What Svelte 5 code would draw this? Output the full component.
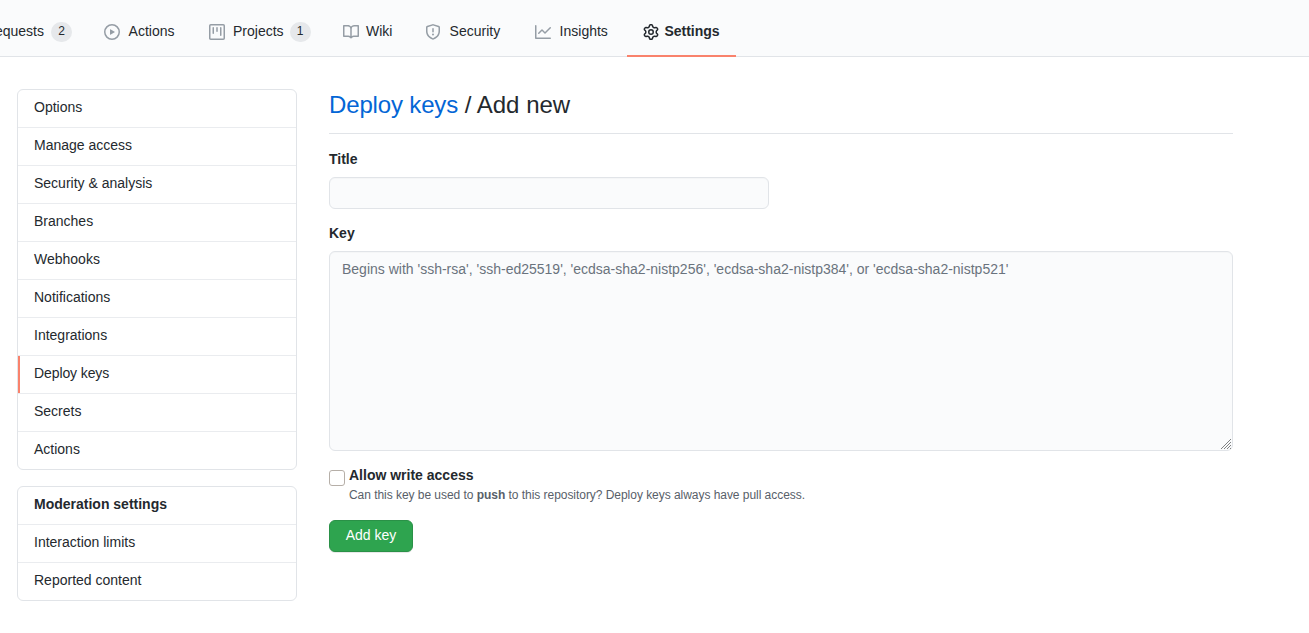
<script>
  const icons = {
    play: 'M1.5 8a6.5 6.5 0 1113 0 6.5 6.5 0 01-13 0zM8 0a8 8 0 100 16A8 8 0 008 0zM6.379 5.227A.25.25 0 006 5.442v5.117a.25.25 0 00.379.214l4.264-2.559a.25.25 0 000-.428L6.379 5.227z',
    project: 'M1.75 0A1.75 1.75 0 000 1.75v12.5C0 15.216.784 16 1.75 16h12.5A1.75 1.75 0 0016 14.25V1.75A1.75 1.75 0 0014.25 0H1.75zM1.5 1.75a.25.25 0 01.25-.25h12.5a.25.25 0 01.25.25v12.5a.25.25 0 01-.25.25H1.75a.25.25 0 01-.25-.25V1.75zM11.75 3a.75.75 0 00-.75.75v7.5a.75.75 0 001.5 0v-7.5a.75.75 0 00-.75-.75zm-8.25.75a.75.75 0 011.5 0v5.5a.75.75 0 01-1.5 0v-5.5zM8 3a.75.75 0 00-.75.75v3.5a.75.75 0 001.5 0v-3.5A.75.75 0 008 3z',
    book: 'M0 1.75A.75.75 0 01.75 1h4.253c1.227 0 2.317.59 3 1.501A3.744 3.744 0 0111.006 1h4.245a.75.75 0 01.75.75v10.5a.75.75 0 01-.75.75h-4.507a2.25 2.25 0 00-1.591.659l-.622.621a.75.75 0 01-1.06 0l-.622-.621A2.25 2.25 0 005.258 13H.75a.75.75 0 01-.75-.75V1.75zm8.755 3a2.25 2.25 0 012.25-2.25H14.5v9h-3.757c-.71 0-1.4.201-1.992.572l.004-7.322zm-1.504 7.324l.004-5.073-.002-2.253A2.25 2.25 0 005.003 2.5H1.5v9h3.757a3.75 3.75 0 011.994.574z',
    shield: 'M7.467.133a1.75 1.75 0 011.066 0l5.25 1.68A1.75 1.75 0 0115 3.48V7c0 1.566-.32 3.182-1.303 4.682-.983 1.498-2.585 2.813-5.032 3.855a1.7 1.7 0 01-1.33 0c-2.447-1.042-4.049-2.357-5.032-3.855C1.32 10.182 1 8.566 1 7V3.48a1.75 1.75 0 011.217-1.667l5.25-1.68zm.61 1.429a.25.25 0 00-.153 0l-5.25 1.68a.25.25 0 00-.174.238V7c0 1.358.275 2.666 1.057 3.86.784 1.194 2.121 2.34 4.366 3.297a.2.2 0 00.154 0c2.245-.956 3.582-2.104 4.366-3.298C13.225 9.666 13.5 8.36 13.5 7V3.48a.25.25 0 00-.174-.237l-5.25-1.68zM9 10.5a1 1 0 11-2 0 1 1 0 012 0zm-.25-5.75a.75.75 0 10-1.5 0v3a.75.75 0 001.5 0v-3z',
    graph: 'M1.5 1.75a.75.75 0 00-1.5 0v12.5c0 .414.336.75.75.75h14.5a.75.75 0 000-1.5H1.5V1.75zm14.28 2.53a.75.75 0 00-1.06-1.06L10 7.94 7.53 5.47a.75.75 0 00-1.06 0L3.22 8.72a.75.75 0 001.06 1.06L7 7.06l2.47 2.47a.75.75 0 001.06 0l5.25-5.25z',
    gear: 'M7.429 1.525a6.593 6.593 0 011.142 0c.036.003.108.036.137.146l.289 1.105c.147.56.55.967.997 1.189.174.086.341.183.501.29.417.278.97.423 1.53.27l1.102-.303c.11-.03.175.016.195.046.219.31.41.641.573.989.014.031.022.11-.059.19l-.815.806c-.411.406-.562.957-.53 1.456a4.588 4.588 0 010 .582c-.032.499.119 1.05.53 1.456l.815.806c.08.08.073.159.059.19a6.494 6.494 0 01-.573.99c-.02.029-.086.074-.195.045l-1.103-.303c-.559-.153-1.112-.008-1.529.27-.16.107-.327.204-.5.29-.449.222-.851.628-.998 1.189l-.289 1.105c-.029.11-.101.143-.137.146a6.613 6.613 0 01-1.142 0c-.036-.003-.108-.037-.137-.146l-.289-1.105c-.147-.56-.55-.967-.997-1.189a4.502 4.502 0 01-.501-.29c-.417-.278-.97-.423-1.53-.27l-1.102.303c-.11.03-.175-.016-.195-.046a6.492 6.492 0 01-.573-.989c-.014-.031-.022-.11.059-.19l.815-.806c.411-.406.562-.957.53-1.456a4.587 4.587 0 010-.582c.032-.499-.119-1.05-.53-1.456l-.815-.806c-.08-.08-.073-.159-.059-.19a6.44 6.44 0 01.573-.99c.02-.029.086-.075.195-.045l1.103.303c.559.153 1.112.008 1.529-.27.16-.107.327-.204.5-.29.449-.222.851-.628.998-1.189l.289-1.105c.029-.11.101-.143.137-.146zM8 0c-.236 0-.47.01-.701.03-.743.065-1.29.615-1.458 1.261l-.29 1.106c-.017.066-.078.158-.211.224a5.994 5.994 0 00-.668.386c-.123.082-.233.09-.3.071L3.27 2.776c-.644-.177-1.392.02-1.82.63a7.977 7.977 0 00-.704 1.217c-.315.675-.111 1.422.363 1.891l.815.806c.05.048.098.147.088.294a6.084 6.084 0 000 .772c.01.147-.038.246-.088.294l-.815.806c-.474.469-.678 1.216-.363 1.891.2.428.436.835.704 1.218.428.609 1.176.806 1.82.63l1.103-.303c.066-.019.176-.011.299.071.213.143.436.272.668.386.133.066.194.158.212.224l.289 1.106c.169.646.715 1.196 1.458 1.26a8.094 8.094 0 001.402 0c.743-.064 1.29-.614 1.458-1.26l.29-1.106c.017-.066.078-.158.211-.224a5.98 5.98 0 00.668-.386c.123-.082.233-.09.3-.071l1.102.302c.644.177 1.392-.02 1.82-.63.268-.382.505-.789.704-1.217.315-.675.111-1.422-.364-1.891l-.814-.806c-.05-.048-.098-.147-.088-.294a6.1 6.1 0 000-.772c-.01-.147.039-.246.088-.294l.814-.806c.475-.469.679-1.216.364-1.891a7.992 7.992 0 00-.704-1.218c-.428-.609-1.176-.806-1.82-.63l-1.103.303c-.066.019-.176.011-.299-.071a5.991 5.991 0 00-.668-.386c-.133-.066-.194-.158-.212-.224L10.16 1.29C9.99.645 9.444.095 8.701.031A8.094 8.094 0 008 0zm1.5 8a1.5 1.5 0 11-3 0 1.5 1.5 0 013 0zM11 8a3 3 0 11-6 0 3 3 0 016 0z'
  };

  const tabs = [
    { label: 'Actions', icon: 'play', width: 105 },
    { label: 'Projects', icon: 'project', count: 1, width: 134 },
    { label: 'Wiki', icon: 'book', width: 82 },
    { label: 'Security', icon: 'shield', width: 110 },
    { label: 'Insights', icon: 'graph', width: 108 },
    { label: 'Settings', icon: 'gear', width: 109, selected: true }
  ];

  const menu = ['Options', 'Manage access', 'Security & analysis', 'Branches', 'Webhooks', 'Notifications', 'Integrations', 'Deploy keys', 'Secrets', 'Actions'];
  const moderation = ['Interaction limits', 'Reported content'];
</script>

<nav class="tabs">
  <div class="tab first"><span class="label">Pull requests</span><span class="count">2</span></div>
  {#each tabs as t}
    <div class="tab {t.icon}" class:selected={t.selected} style:width="{t.width}px">
      <svg viewBox="0 0 16 16" width="16" height="16"><path fill-rule="evenodd" d={icons[t.icon]} /></svg>
      <span class="label">{t.label}</span>
      {#if t.count}<span class="count">{t.count}</span>{/if}
    </div>
  {/each}
</nav>

<div class="page">
  <aside>
    <ul class="menu">
      {#each menu as m}
        <li class:current={m === 'Deploy keys'}><span>{m}</span></li>
      {/each}
    </ul>
    <ul class="menu">
      <li class="heading"><span>Moderation settings</span></li>
      {#each moderation as m}<li><span>{m}</span></li>{/each}
    </ul>
  </aside>

  <main>
    <h2><span class="link">Deploy keys</span> / Add new</h2>
    <label for="title">Title</label>
    <input id="title" class="field" type="text" />
    <label for="key">Key</label>
    <div class="area">
      <textarea id="key" class="field" placeholder="Begins with 'ssh-rsa', 'ssh-ed25519', 'ecdsa-sha2-nistp256', 'ecdsa-sha2-nistp384', or 'ecdsa-sha2-nistp521'"></textarea>
      <svg class="grip" viewBox="0 0 12 12" width="12" height="12"><path d="M1 11L11 1M4 11l7-7M7 11l4-4M10 11l1-1" /></svg>
    </div>
    <div class="check">
      <input id="write" type="checkbox" />
      <div>
        <label for="write">Allow write access</label>
        <p>Can this key be used to <b>push</b> to this repository? Deploy keys always have pull access.</p>
      </div>
    </div>
    <button>Add key</button>
  </main>
</div>

<style>
  :global(body) {
    margin: 0;
    overflow: hidden;
    background: #fff;
    color: #24292e;
    font: 14px/21px "Liberation Sans", Arial, sans-serif;
  }
  * { box-sizing: border-box; }
  .tabs {
    display: flex;
    height: 57px;
    background: #fafbfc;
    border-bottom: 1px solid #e1e4e8;
  }
  .tab {
    display: flex;
    flex: none;
    height: 57px;
    padding: 7px 0 0 16px;
    align-items: center;
    white-space: nowrap;
    border-bottom: 2px solid transparent;
  }
  .tab.first { width: 88px; padding: 7px 16px 0 0; justify-content: flex-end; }
  .tab svg { flex: none; margin-right: 8.6px; fill: #959da5; position: relative; top: 1px; }
  .tab.project svg { margin-right: 8px; }
  .tab.book svg { margin-right: 7px; }
  .tab .count {
    flex: none;
    width: 21px;
    height: 20px;
    margin: 2px 0 0 7px;
    border-radius: 10px;
    background: rgba(209, 213, 218, 0.5);
    font-size: 12px;
    font-weight: 500;
    line-height: 19px;
    text-align: center;
  }
  .tab.project .count { margin-left: 6px; }
  .tab.selected { border-bottom: 2px solid #f9826c; font-weight: 600; }
  .tab.selected svg { fill: #24292e; margin-right: 5.4px; }
  .page { display: flex; gap: 32px; padding: 32px 76px 0 17px; }
  aside { width: 280px; flex: none; }
  .menu {
    list-style: none;
    margin: 0 0 16px;
    padding: 0;
    border: 1px solid #e1e4e8;
    border-radius: 6px;
    overflow: hidden;
  }
  .menu li { height: 38px; padding: 7px 16px; border-bottom: 1px solid #eaecef; }
  .menu li:last-child { height: 37px; border-bottom: 0; }
  .menu .current { box-shadow: inset 2px 0 #f9826c; letter-spacing: -0.1px; }
  .menu .heading { font-weight: 600; }
  main { flex: 1; }
  h2 {
    margin: 0 0 16px;
    height: 45px;
    border-bottom: 1px solid #e1e4e8;
    font-size: 24px;
    font-weight: 400;
    line-height: 31px;
  }
  .link { color: #0366d6; letter-spacing: -0.15px; }
  label { display: block; height: 21px; font-weight: 600; line-height: 19px; }
  .field {
    display: block;
    background: #fafbfc;
    border: 1px solid #e1e4e8;
    border-radius: 6px;
    box-shadow: inset 0 1px 0 rgba(225, 228, 232, 0.2);
    font: inherit;
    padding: 6px 12px;
    outline: none;
  }
  input.field { width: 440px; height: 32px; margin: 6px 0 15px; }
  .area { position: relative; margin: 6px 0 16px; }
  textarea.field { width: 100%; height: 200px; padding-top: 7px; resize: none; }
  .grip { position: absolute; right: 1px; bottom: 1px; fill: none; stroke: #808283; stroke-width: 1; }
  textarea::placeholder { color: #6a737d; }
  .check { display: flex; gap: 4px; }
  .check input {
    appearance: none;
    width: 16px;
    height: 16px;
    margin: 3px 0 0;
    border: 1px solid #b6afa8;
    border-radius: 3px;
    background: #fff;
  }
  .check label { height: 19px; line-height: 17px; }
  p { margin: 0; font-size: 12px; line-height: 18px; color: #586069; letter-spacing: -0.042px; }
  button {
    display: block;
    width: 84px;
    height: 32px;
    margin-top: 16px;
    padding: 0 0 2px;
    color: #fff;
    background: #2ea44f;
    border: 1px solid #2a9147;
    border-radius: 6px;
    box-shadow: 0 1px 0 rgba(27, 31, 35, 0.1);
    font: inherit;
  }
</style>
